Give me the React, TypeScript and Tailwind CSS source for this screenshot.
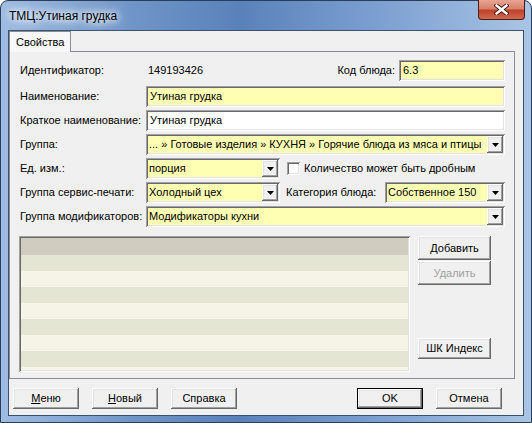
import React from "react";

const sunken =
  "shadow-[inset_1px_1px_0_#a0a0a0,inset_-1px_-1px_0_#ffffff,inset_2px_2px_0_#696969,inset_-2px_-2px_0_#e3e3e3]";
const raised =
  "shadow-[inset_-1px_-1px_0_#696969,inset_1px_1px_0_#ffffff,inset_-2px_-2px_0_#a0a0a0,inset_2px_2px_0_#e3e3e3]";

const Arrow = () => (
  <div className={`w-[16px] h-[17px] mr-[2px] shrink-0 bg-[#f0f0f0] flex items-center justify-center ${raised}`}>
    <svg width="7" height="4" viewBox="0 0 7 4">
      <path d="M0 0h7L3.5 4z" fill="#000" />
    </svg>
  </div>
);

const Input = ({ value = "", yellow = true, className = "" }: { value?: string; yellow?: boolean; className?: string }) => (
  <div className={`h-[21px] flex items-center pl-[4px] ${yellow ? "bg-[#ffffb4]" : "bg-white"} ${sunken} ${className}`}>
    {value}
  </div>
);

const Combo = ({ value, className = "" }: { value: string; className?: string }) => (
  <div className={`h-[21px] flex items-center bg-[#ffffb4] ${sunken} ${className}`}>
    <span className="flex-1 pl-[3px] whitespace-nowrap overflow-hidden">{value}</span>
    <Arrow />
  </div>
);

const Label = ({ children }: { children: React.ReactNode }) => (
  <div className="w-[126px] shrink-0">{children}</div>
);

const Btn = ({
  children,
  className = "",
  disabled = false,
  def = false,
}: {
  children: React.ReactNode;
  className?: string;
  disabled?: boolean;
  def?: boolean;
}) => (
  <div
    className={`flex items-center justify-center bg-[#f0f0f0] ${def ? "border border-black" : ""} ${raised} ${
      disabled ? "text-[#a0a0a0]" : "text-black"
    } ${className}`}
  >
    {children}
  </div>
);

const rows = ["bg-[#e5e5d4]", "bg-[#f6f3e7]", "bg-[#e5e5d4]", "bg-[#f6f3e7]", "bg-[#e5e5d4]", "bg-[#f6f3e7]", "bg-[#e5e5d4]", "bg-[#f6f3e7]"];

export default function App() {
  return (
    <div className="w-[532px] h-[423px] bg-white overflow-hidden font-['Liberation_Sans',Arial,sans-serif] text-[11px] text-black">
      <div className="w-full h-full rounded-t-[8px] border border-[#2b3d57] bg-[linear-gradient(90deg,#9fbce2_0%,#6f95c8_25%,#5a82ba_45%,#7a9ed0_70%,#a9c4e5_100%)] flex flex-col">
        {/* title bar */}
        <div className="relative h-[29px] shrink-0 flex items-center pl-[8px]">
          <span className="text-[12px] [text-shadow:0_0_6px_#ffffff,0_0_10px_#ffffff,0_0_14px_#ffffff]">ТМЦ:Утиная грудка</span>
          <div className="absolute right-[6px] top-[-1px] w-[47px] h-[20px] rounded-b-[4px] border border-[#4a1d15] border-t-0 bg-[linear-gradient(180deg,#e8a593_0%,#d7826c_45%,#c0412a_55%,#cf6a4f_100%)] flex items-center justify-center">
            <svg width="15" height="11" viewBox="0 0 15 11">
              <path d="M2.5 1.5L12.5 9.5M12.5 1.5L2.5 9.5" stroke="#3a1a14" strokeWidth="4.2" strokeLinecap="square" />
              <path d="M2.5 1.5L12.5 9.5M12.5 1.5L2.5 9.5" stroke="#ffffff" strokeWidth="2.4" strokeLinecap="square" />
            </svg>
          </div>
        </div>

        {/* client */}
        <div className="mx-[7px] h-[386px] shrink-0 border border-[#3b5069] bg-[#f0f0f0] flex flex-col">
          <div className="h-[20px] flex items-end">
            <div className="relative z-10 h-[21px] -mb-px w-[62px] border border-b-0 border-[#898c95] bg-[#f7f7f7] flex items-center pl-[6px]">
              Свойства
            </div>
          </div>
          <div className="h-[328px] mr-[8px] border border-[#898c95] bg-[#f0f0f0] pt-[8px] pl-[10px] pr-[9px] flex flex-col">
            <div className="h-[21px] flex items-center">
              <Label>Идентификатор:</Label>
              <span className="pl-[2px]">149193426</span>
              <div className="flex-1" />
              <span className="mr-[4px]">Код блюда:</span>
              <Input value="6.3" className="w-[106px]" />
            </div>
            <div className="h-[21px] mt-[5px] flex items-center">
              <Label>Наименование:</Label>
              <Input value="Утиная грудка" className="flex-1" />
            </div>
            <div className="h-[21px] mt-[3px] flex items-center">
              <Label>Краткое наименование:</Label>
              <Input value="Утиная грудка" yellow={false} className="flex-1" />
            </div>
            <div className="h-[21px] mt-[3px] flex items-center">
              <Label>Группа:</Label>
              <Combo value="... » Готовые изделия » КУХНЯ » Горячие блюда из мяса и птицы" className="flex-1" />
            </div>
            <div className="h-[21px] mt-[3px] flex items-center">
              <Label>Ед. изм.:</Label>
              <Combo value="порция" className="w-[134px]" />
              <div className={`ml-[7px] w-[13px] h-[13px] bg-white ${sunken}`} />
              <span className="ml-[4px]">Количество может быть дробным</span>
            </div>
            <div className="h-[21px] mt-[3px] flex items-center">
              <Label>Группа сервис-печати:</Label>
              <Combo value="Холодный цех" className="w-[134px]" />
              <span className="ml-[6px] flex-1">Категория блюда:</span>
              <Combo value="Собственное 150" className="w-[120px]" />
            </div>
            <div className="h-[21px] mt-[3px] flex items-center">
              <Label>Группа модификаторов:</Label>
              <Combo value="Модификаторы кухни" className="flex-1" />
            </div>

            <div className="mt-[9px] flex">
              <div className={`-ml-px w-[391px] h-[136px] p-[2px] bg-[#f6f3e7] ${sunken}`}>
                <div className="h-full overflow-hidden">
                  <div className="h-[17px] bg-[#d0ccbf]" />
                  {rows.map((c, i) => (
                    <div key={i} className={`h-[16px] ${c}`} />
                  ))}
                </div>
              </div>
              <div className="ml-[8px] w-[73px] flex flex-col">
                <Btn className="h-[24px]">Добавить</Btn>
                <Btn className="h-[24px] mt-px" disabled>
                  Удалить
                </Btn>
                <Btn className="h-[21px] mt-[53px]">ШК Индекс</Btn>
              </div>
            </div>
          </div>

          <div className="mt-[9px] pl-[4px] pr-[21px] flex">
            <Btn className="w-[66px] h-[21px]">
              <span>
                <span className="underline">М</span>еню
              </span>
            </Btn>
            <Btn className="w-[66px] h-[21px] ml-[13px]">
              <span>
                <span className="underline">Н</span>овый
              </span>
            </Btn>
            <Btn className="w-[66px] h-[21px] ml-[13px]">Справка</Btn>
            <div className="flex-1" />
            <Btn className="w-[66px] h-[21px]" def>
              OK
            </Btn>
            <Btn className="w-[66px] h-[21px] ml-[13px]">Отмена</Btn>
          </div>
        </div>
      </div>
    </div>
  );
}
